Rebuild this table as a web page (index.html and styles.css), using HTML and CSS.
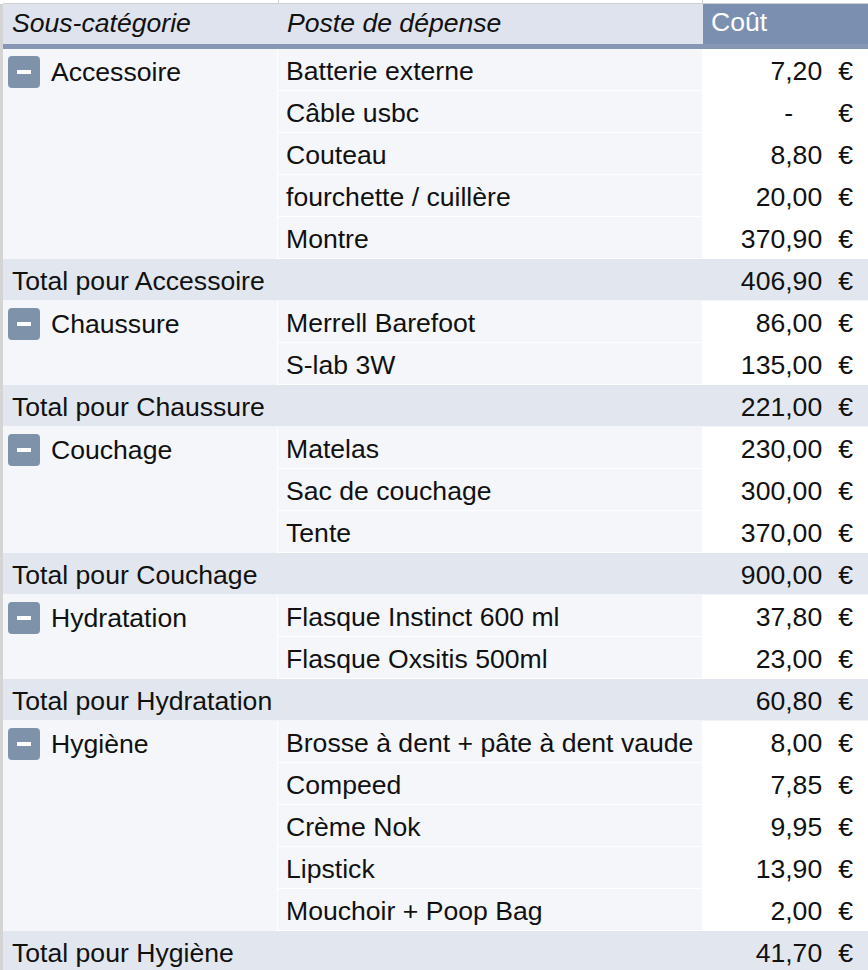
FILE: index.html
```html
<!DOCTYPE html>
<html lang="fr">
<head>
<meta charset="utf-8">
<link rel="stylesheet" href="styles.css">
</head>
<body>
<div class="sheet">
  <div class="topstrip"><span class="tc1"></span><span class="tc2"></span><span class="tc3"></span></div>
  <div class="table">
    <div class="row head">
      <div class="c1">Sous-catégorie</div>
      <div class="c2">Poste de dépense</div>
      <div class="hc3">Coût</div>
    </div>

    <div class="group">
      <div class="cat"><span class="btn"></span>Accessoire</div>
      <div class="items">
        <div class="item"><div class="c2">Batterie externe</div><div class="c3"><span class="n">7,20</span><span class="eur">€</span></div></div>
        <div class="item"><div class="c2">Câble usbc</div><div class="c3"><span class="n dash">-</span><span class="eur">€</span></div></div>
        <div class="item"><div class="c2">Couteau</div><div class="c3"><span class="n">8,80</span><span class="eur">€</span></div></div>
        <div class="item"><div class="c2">fourchette / cuillère</div><div class="c3"><span class="n">20,00</span><span class="eur">€</span></div></div>
        <div class="item"><div class="c2">Montre</div><div class="c3"><span class="n">370,90</span><span class="eur">€</span></div></div>
      </div>
    </div>
    <div class="row total"><div class="tl">Total pour Accessoire</div><div class="c3"><span class="n">406,90</span><span class="eur">€</span></div></div>

    <div class="group">
      <div class="cat"><span class="btn"></span>Chaussure</div>
      <div class="items">
        <div class="item"><div class="c2">Merrell Barefoot</div><div class="c3"><span class="n">86,00</span><span class="eur">€</span></div></div>
        <div class="item"><div class="c2">S-lab 3W</div><div class="c3"><span class="n">135,00</span><span class="eur">€</span></div></div>
      </div>
    </div>
    <div class="row total"><div class="tl">Total pour Chaussure</div><div class="c3"><span class="n">221,00</span><span class="eur">€</span></div></div>

    <div class="group">
      <div class="cat"><span class="btn"></span>Couchage</div>
      <div class="items">
        <div class="item"><div class="c2">Matelas</div><div class="c3"><span class="n">230,00</span><span class="eur">€</span></div></div>
        <div class="item"><div class="c2">Sac de couchage</div><div class="c3"><span class="n">300,00</span><span class="eur">€</span></div></div>
        <div class="item"><div class="c2">Tente</div><div class="c3"><span class="n">370,00</span><span class="eur">€</span></div></div>
      </div>
    </div>
    <div class="row total"><div class="tl">Total pour Couchage</div><div class="c3"><span class="n">900,00</span><span class="eur">€</span></div></div>

    <div class="group">
      <div class="cat"><span class="btn"></span>Hydratation</div>
      <div class="items">
        <div class="item"><div class="c2">Flasque Instinct 600 ml</div><div class="c3"><span class="n">37,80</span><span class="eur">€</span></div></div>
        <div class="item"><div class="c2">Flasque Oxsitis 500ml</div><div class="c3"><span class="n">23,00</span><span class="eur">€</span></div></div>
      </div>
    </div>
    <div class="row total"><div class="tl">Total pour Hydratation</div><div class="c3"><span class="n">60,80</span><span class="eur">€</span></div></div>

    <div class="group">
      <div class="cat"><span class="btn"></span>Hygiène</div>
      <div class="items">
        <div class="item"><div class="c2">Brosse à dent + pâte à dent vaude</div><div class="c3"><span class="n">8,00</span><span class="eur">€</span></div></div>
        <div class="item"><div class="c2">Compeed</div><div class="c3"><span class="n">7,85</span><span class="eur">€</span></div></div>
        <div class="item"><div class="c2">Crème Nok</div><div class="c3"><span class="n">9,95</span><span class="eur">€</span></div></div>
        <div class="item"><div class="c2">Lipstick</div><div class="c3"><span class="n">13,90</span><span class="eur">€</span></div></div>
        <div class="item"><div class="c2">Mouchoir + Poop Bag</div><div class="c3"><span class="n">2,00</span><span class="eur">€</span></div></div>
      </div>
    </div>
    <div class="row total"><div class="tl">Total pour Hygiène</div><div class="c3"><span class="n">41,70</span><span class="eur">€</span></div></div>
  </div>
</div>
</body>
</html>
```
FILE: styles.css
```css
html, body {
  margin: 0;
  padding: 0;
  background: #ffffff;
}
body {
  font-family: "Liberation Sans", Arial, sans-serif;
  font-size: 26.6px;
  color: #111111;
  overflow: hidden;
}
.sheet {
  width: 868px;
  height: 970px;
  overflow: hidden;
}
.topstrip {
  height: 3px;
  border-bottom: 1px solid #d0d0d0;
  display: flex;
  margin-left: 3px;
}
.topstrip span { display: block; height: 3px; }
.tc1 { width: 275px; border-right: 1px solid #d0d0d0; }
.tc2 { width: 423px; border-right: 1px solid #d0d0d0; }
.tc3 { flex: 1; }
.table {
  border-left: 3px solid #d4d4d4;
  width: 865px;
}
.row {
  display: flex;
  height: 42px;
  align-items: center;
}
.head {
  height: 40px;
  border-bottom: 5px solid #8597b5;
  background: #dfe3ed;
  align-items: stretch;
}
.head > div {
  display: flex;
  align-items: center;
  font-style: italic;
  padding-bottom: 1px;
}
.head .c1 { width: 276px; padding-left: 9px; box-sizing: border-box; }
.head .c2 { width: 424px; padding-left: 8px; box-sizing: border-box; }
.head .hc3 {
  flex: 1;
  background: #7b8fb1;
  color: #ffffff;
  font-style: normal;
  padding-left: 8px;
  padding-bottom: 4px;
}
.group {
  display: flex;
}
.cat {
  width: 275px;
  background: #f4f6fa;
  border-right: 1px solid #ffffff;
  display: flex;
  align-items: flex-start;
  padding-top: 7px;
  padding-left: 5px;
  box-sizing: border-box;
  line-height: 32px;
}
.btn {
  width: 32px;
  height: 32px;
  border-radius: 4px;
  background: #7e92aa;
  position: relative;
  margin-right: 11px;
  flex: none;
}
.btn::after {
  content: "";
  position: absolute;
  left: 9px;
  right: 9px;
  top: 14px;
  height: 4px;
  background: #ffffff;
}
.items {
  flex: 1;
}
.item {
  display: flex;
  height: 42px;
  align-items: center;
}
.item .c2 {
  width: 424px;
  height: 42px;
  line-height: 39px;
  padding-top: 3px;
  padding-left: 8px;
  box-sizing: border-box;
  background: #f4f6fa;
  border-bottom: 1px solid #ffffff;
  white-space: nowrap;
}
.c3 {
  flex: 1;
  display: flex;
  justify-content: flex-end;
  align-items: center;
  height: 42px;
  padding-top: 3px;
  box-sizing: border-box;
  background: #ffffff;
}
.n { text-align: right; }
.n.dash { margin-right: 29px; }
.eur { margin-left: 16px; margin-right: 15px; }
.total {
  background: #e2e6ee;
  border-bottom: 1px solid #f3f4f7;
  box-sizing: border-box;
}
.total .tl {
  width: 700px;
  padding-left: 9px;
  padding-top: 3px;
  box-sizing: border-box;
}
.total .c3 { background: transparent; }
```
